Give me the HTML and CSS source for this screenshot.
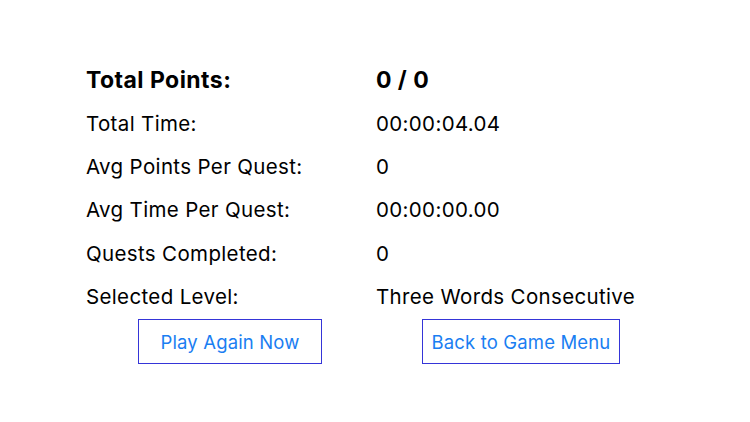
FILE: index.html
```html
<!DOCTYPE html>
<html>
<head>
<meta charset="utf-8">
<link rel="stylesheet" href="styles.css">
</head>
<body>
<div class="stats">
  <div class="label bold">Total Points:</div><div class="value bold">0 / 0</div>
  <div class="label">Total Time:</div><div class="value">00:00:04.04</div>
  <div class="label">Avg Points Per Quest:</div><div class="value">0</div>
  <div class="label">Avg Time Per Quest:</div><div class="value">00:00:00.00</div>
  <div class="label">Quests Completed:</div><div class="value">0</div>
  <div class="label">Selected Level:</div><div class="value">Three Words Consecutive</div>
  <div class="btn-cell"><button class="btn btn-play">Play Again Now</button></div>
  <div class="btn-cell"><button class="btn btn-back">Back to Game Menu</button></div>
</div>
</body>
</html>
```
FILE: styles.css
```css
html, body {
  margin: 0;
  padding: 0;
  background: #fff;
}
body {
  font-family: Inter, "Noto Sans", sans-serif;
  color: #000;
}
.stats {
  display: grid;
  grid-template-columns: 290px 290px;
  grid-template-rows: repeat(6, 43.4px) auto;
  padding: 58px 0 0 86px;
}
.label, .value {
  font-size: 20.5px;
  display: flex;
  align-items: center;
  letter-spacing: 0.35px;
  white-space: nowrap;
}
.bold {
  font-size: 23px;
  font-weight: 700;
  letter-spacing: 0.45px;
}
.btn-cell {
  display: flex;
  justify-content: center;
  align-items: flex-start;
  padding-top: 1px;
}
.btn {
  height: 45px;
  border: 1.5px solid #3535d8;
  background: #fff;
  color: #1a7ef2;
  font-family: Inter, "Noto Sans", sans-serif;
  font-size: 18.5px;
  letter-spacing: 0.15px;
  padding: 0;
  margin: 0;
}
.btn-play { width: 184px; margin-left: -2px; }
.btn-back { width: 198px; }
```
